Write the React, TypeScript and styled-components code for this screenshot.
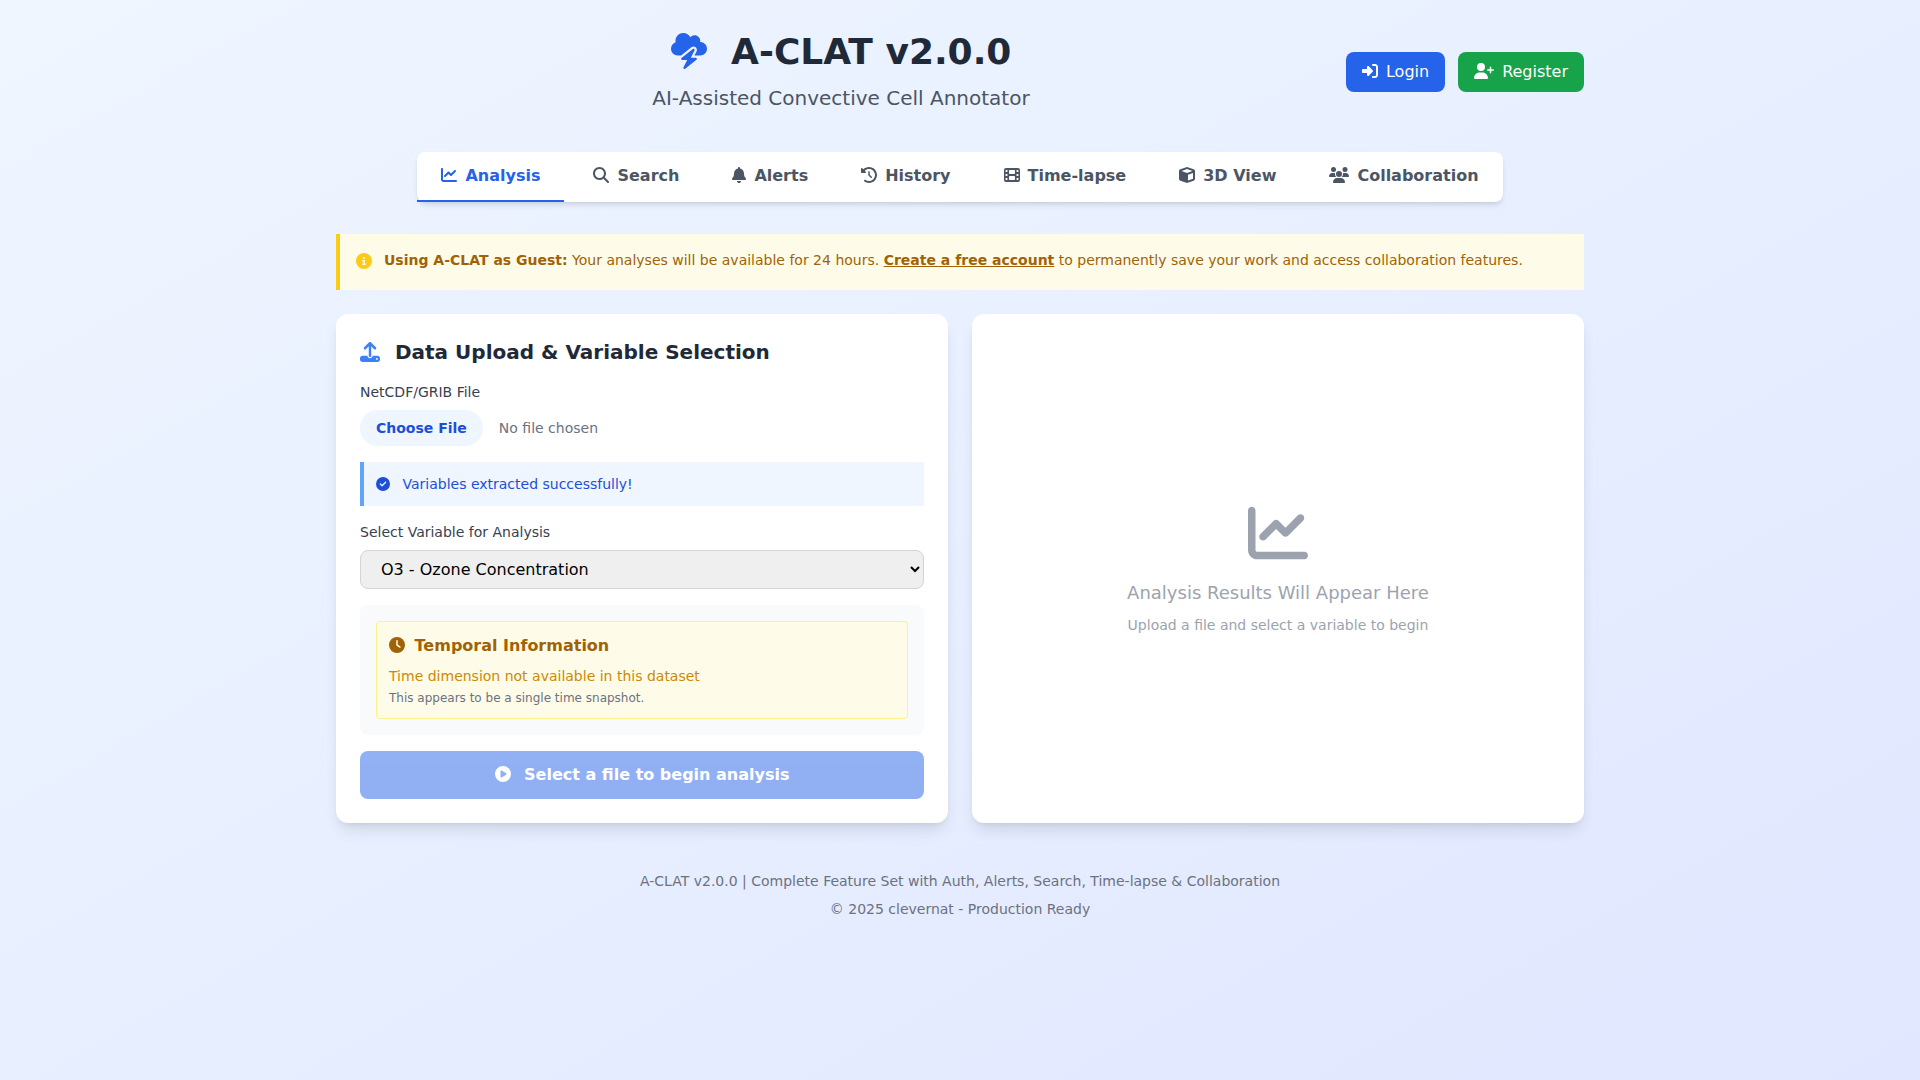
import React from "react";
import styled, { createGlobalStyle, css } from "styled-components";
import {
  FaBell,
  FaChartLine,
  FaCircleCheck,
  FaCircleInfo,
  FaCirclePlay,
  FaClock,
  FaClockRotateLeft,
  FaCloudBolt,
  FaCube,
  FaFilm,
  FaMagnifyingGlass,
  FaRightToBracket,
  FaUpload,
  FaUserPlus,
  FaUsers,
} from "react-icons/fa6";

const GlobalStyle = createGlobalStyle`
  *, *::before, *::after { box-sizing: border-box; }
  body {
    margin: 0;
    font-family: "DejaVu Sans", sans-serif;
    font-size: 16px;
    line-height: 24px;
  }
  h1, h2, h3, p { margin: 0; }
  button, select, input { font: inherit; }
`;

const Page = styled.div`
  min-height: 100vh;
  background: linear-gradient(to bottom right, #eff6ff, #e0e7ff);
`;

const Container = styled.div`
  max-width: 1280px;
  margin: 0 auto;
  padding: 32px 16px;
`;

const Icon = styled.span<{ $gap?: number; $color?: string; $wide?: boolean }>`
  margin-right: ${(p) => p.$gap ?? 8}px;
  color: ${(p) => p.$color ?? "inherit"};
  svg {
    display: inline-block;
    height: 1em;
    width: ${(p) => (p.$wide ? "1.25em" : "1em")};
    vertical-align: -0.125em;
  }
`;

const Header = styled.header`
  display: flex;
  align-items: center;
  margin-bottom: 40px;
`;

const Brand = styled.div`
  flex: 1;
  text-align: center;
`;

const Title = styled.h1`
  margin-bottom: 12px;
  color: #1f2937;
  font-size: 36px;
  line-height: 40px;
  font-weight: 700;
`;

const Subtitle = styled.p`
  color: #4b5563;
  font-size: 20px;
  line-height: 28px;
`;

const AuthActions = styled.div`
  display: flex;
  gap: 13px;
`;

const AuthButton = styled.button<{ $color: string }>`
  padding: 8px 16px;
  border: 0;
  border-radius: 8px;
  background: ${(p) => p.$color};
  color: #fff;
  cursor: pointer;
`;

const TabRow = styled.div`
  display: flex;
  justify-content: center;
  margin-bottom: 32px;
`;

const Tabs = styled.nav`
  display: flex;
  gap: 5px;
  border-radius: 8px;
  background: #fff;
  box-shadow: 0 4px 6px -1px rgba(0, 0, 0, 0.1), 0 2px 4px -2px rgba(0, 0, 0, 0.1);
`;

const Tab = styled.button<{ $active: boolean }>`
  padding: 12px 24px;
  border: 0;
  border-bottom: 2px solid transparent;
  background: transparent;
  color: #4b5563;
  font-weight: 600;
  cursor: pointer;
  ${(p) =>
    p.$active &&
    css`
      border-bottom-color: #2563eb;
      color: #2563eb;
    `}
`;

const GuestBanner = styled.div`
  display: flex;
  margin-bottom: 24px;
  padding: 16px;
  border-left: 4px solid #facc15;
  background: #fefce8;
`;

const BannerText = styled.p`
  color: #a16207;
  font-size: 14px;
  line-height: 20px;
  a {
    color: inherit;
    font-weight: 700;
  }
`;

const Columns = styled.main`
  display: grid;
  grid-template-columns: 1fr 1fr;
  gap: 24px;
`;

const Card = styled.section`
  padding: 24px;
  border-radius: 12px;
  background: #fff;
  box-shadow: 0 10px 15px -3px rgba(0, 0, 0, 0.1), 0 4px 6px -4px rgba(0, 0, 0, 0.1);
`;

const UploadCard = styled(Card)`
  display: flex;
  flex-direction: column;
  gap: 16px;
`;

const ResultsCard = styled(Card)`
  display: flex;
  flex-direction: column;
  align-items: center;
  justify-content: center;
  color: #9ca3af;
  text-align: center;
`;

const CardTitle = styled.h2`
  color: #1f2937;
  font-size: 20px;
  line-height: 28px;
  font-weight: 700;
`;

const Field = styled.div`
  display: flex;
  flex-direction: column;
  gap: 8px;
`;

const Label = styled.label`
  color: #374151;
  font-size: 14px;
  line-height: 20px;
`;

const FileInput = styled.input`
  width: 100%;
  color: #6b7280;
  font-size: 14px;
  line-height: 20px;
  &::file-selector-button {
    margin-right: 16px;
    padding: 8px 16px;
    border: 0;
    border-radius: 9999px;
    background: #eff6ff;
    color: #1d4ed8;
    font: inherit;
    font-weight: 600;
  }
`;

const Status = styled.div`
  padding: 12px;
  border-left: 4px solid #60a5fa;
  background: #eff6ff;
  color: #1d4ed8;
  font-size: 14px;
  line-height: 20px;
`;

const VariableSelect = styled.select`
  width: 100%;
  padding: 8px 16px;
  border: 1px solid #d1d5db;
  border-radius: 8px;
  background: #efefef;
  color: #000;
`;

const InfoPanel = styled.div`
  padding: 16px;
  border-radius: 8px;
  background: #f9fafb;
`;

const TemporalBox = styled.div`
  padding: 12px;
  border: 1px solid #fef08a;
  border-radius: 4px;
  background: #fefce8;
`;

const TemporalTitle = styled.h3`
  margin-bottom: 8px;
  color: #a16207;
  font-size: 16px;
  line-height: 24px;
  font-weight: 600;
`;

const TemporalText = styled.p`
  margin-bottom: 4px;
  color: #ca8a04;
  font-size: 14px;
  line-height: 20px;
`;

const TemporalNote = styled.p`
  color: #6b7280;
  font-size: 12px;
  line-height: 16px;
`;

const SubmitButton = styled.button`
  padding: 12px 16px;
  border: 0;
  border-radius: 8px;
  background: #2563eb;
  color: #fff;
  font-weight: 700;
  opacity: 0.5;
`;

const ResultsIcon = styled(FaChartLine)`
  width: 60px;
  height: 60px;
  margin-bottom: 16px;
`;

const ResultsTitle = styled.p`
  margin-bottom: 8px;
  font-size: 18px;
  line-height: 28px;
`;

const ResultsHint = styled.p`
  font-size: 14px;
  line-height: 20px;
`;

const Footer = styled.footer`
  display: flex;
  flex-direction: column;
  gap: 8px;
  margin-top: 48px;
  color: #6b7280;
  font-size: 14px;
  line-height: 20px;
  text-align: center;
`;

const tabs = [
  { label: "Analysis", icon: FaChartLine },
  { label: "Search", icon: FaMagnifyingGlass },
  { label: "Alerts", icon: FaBell, narrow: true },
  { label: "History", icon: FaClockRotateLeft },
  { label: "Time-lapse", icon: FaFilm },
  { label: "3D View", icon: FaCube },
  { label: "Collaboration", icon: FaUsers, wide: true },
];

const BellIcon = styled(Icon)`
  svg {
    width: 14px;
  }
`;

export default function App() {
  const [active, setActive] = React.useState("Analysis");

  return (
    <Page>
      <GlobalStyle />
      <Container>
        <Header>
          <Brand>
            <Title>
              <Icon $gap={12} $color="#2563eb"><FaCloudBolt /></Icon> A-CLAT v2.0.0
            </Title>
            <Subtitle>AI-Assisted Convective Cell Annotator</Subtitle>
          </Brand>
          <AuthActions>
            <AuthButton type="button" $color="#2563eb">
              <Icon><FaRightToBracket /></Icon>Login
            </AuthButton>
            <AuthButton type="button" $color="#16a34a">
              <Icon $wide><FaUserPlus /></Icon>Register
            </AuthButton>
          </AuthActions>
        </Header>

        <TabRow>
          <Tabs>
            {tabs.map(({ label, icon: TabIcon, wide, narrow }) => {
              const Holder = narrow ? BellIcon : Icon;
              return (
                <Tab key={label} type="button" $active={label === active} onClick={() => setActive(label)}>
                  <Holder $wide={wide}><TabIcon /></Holder>{label}
                </Tab>
              );
            })}
          </Tabs>
        </TabRow>

        <GuestBanner>
          <Icon $gap={12} $color="#facc15"><FaCircleInfo /></Icon>
          <BannerText>
            <strong>Using A-CLAT as Guest:</strong> Your analyses will be available for 24 hours.{" "}
            <a href="#register">Create a free account</a> to permanently save your work and access
            collaboration features.
          </BannerText>
        </GuestBanner>

        <Columns>
          <UploadCard>
            <CardTitle>
              <Icon $color="#3b82f6"><FaUpload /></Icon> Data Upload &amp; Variable Selection
            </CardTitle>
            <Field>
              <Label htmlFor="data-file">NetCDF/GRIB File</Label>
              <FileInput id="data-file" type="file" />
            </Field>
            <Status role="status">
              <Icon><FaCircleCheck /></Icon> Variables extracted successfully!
            </Status>
            <Field>
              <Label htmlFor="variable">Select Variable for Analysis</Label>
              <VariableSelect id="variable" defaultValue="O3">
                <option value="O3">O3 - Ozone Concentration</option>
              </VariableSelect>
            </Field>
            <InfoPanel>
              <TemporalBox>
                <TemporalTitle>
                  <Icon $gap={4}><FaClock /></Icon> Temporal Information
                </TemporalTitle>
                <TemporalText>Time dimension not available in this dataset</TemporalText>
                <TemporalNote>This appears to be a single time snapshot.</TemporalNote>
              </TemporalBox>
            </InfoPanel>
            <SubmitButton type="button" disabled>
              <Icon><FaCirclePlay /></Icon> Select a file to begin analysis
            </SubmitButton>
          </UploadCard>

          <ResultsCard>
            <ResultsIcon />
            <ResultsTitle>Analysis Results Will Appear Here</ResultsTitle>
            <ResultsHint>Upload a file and select a variable to begin</ResultsHint>
          </ResultsCard>
        </Columns>

        <Footer>
          <p>A-CLAT v2.0.0 | Complete Feature Set with Auth, Alerts, Search, Time-lapse &amp; Collaboration</p>
          <p>© 2025 clevernat - Production Ready</p>
        </Footer>
      </Container>
    </Page>
  );
}
